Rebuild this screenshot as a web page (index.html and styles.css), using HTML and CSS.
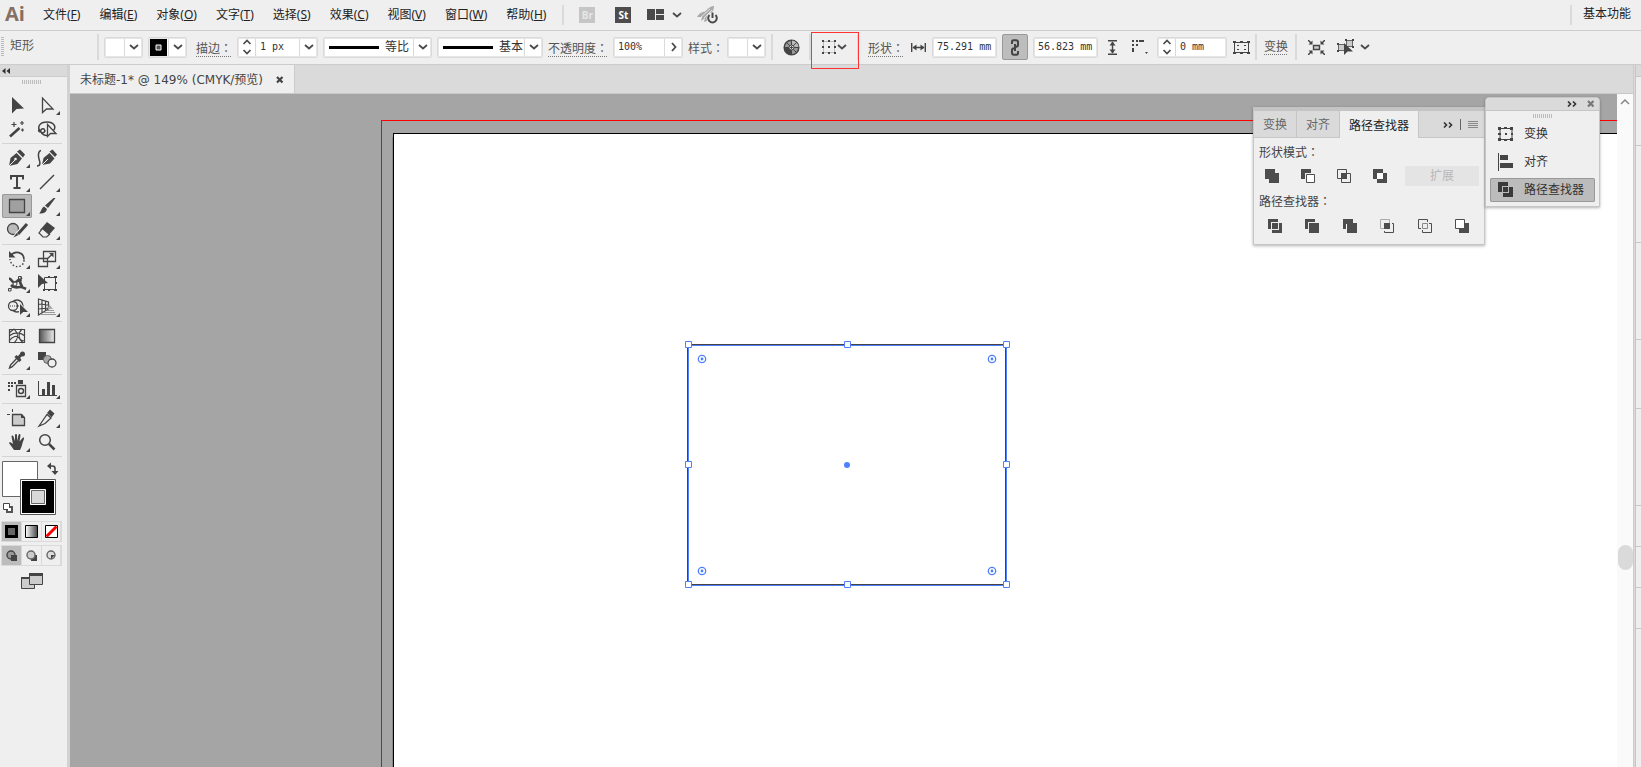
FILE: index.html
```html
<!DOCTYPE html>
<html lang="zh-CN">
<head>
<meta charset="utf-8">
<title>未标题-1</title>
<link rel="stylesheet" href="styles.css">
</head>
<body>
<svg class="defs" width="0" height="0" aria-hidden="true">
  <defs>
    <symbol id="down" viewBox="0 0 10 6"><path d="M1 1l4 3.500 4-3.500" fill="none" stroke="#4a4a4a" stroke-width="1.800"/></symbol>
    <symbol id="updown" viewBox="0 0 10 16"><path d="M1.500 5L5 1.500 8.500 5M1.500 11L5 14.500 8.500 11" fill="none" stroke="#4a4a4a" stroke-width="1.700"/></symbol>
    <symbol id="grip" viewBox="0 0 20 4"><path d="M.5 0v4M2.500 0v4M4.500 0v4M6.500 0v4M8.500 0v4M10.500 0v4M12.500 0v4M14.500 0v4M16.500 0v4M18.500 0v4" stroke="#bcbcbc"/></symbol>
    <symbol id="ffwd" viewBox="0 0 10 6"><path d="M1 .5L3.500 3 1 5.500M6 .5L8.500 3 6 5.500" fill="none" stroke="#333" stroke-width="1.600"/></symbol>
    <symbol id="close" viewBox="0 0 8 8"><path d="M1 1l5.500 5.500M6.500 1L1 6.500" fill="none" stroke="currentColor" stroke-width="2.200"/></symbol>
    <linearGradient id="fade"><stop offset="0" stop-color="#fff"/><stop offset="1" stop-color="#444"/></linearGradient>
    <linearGradient id="fadeDark"><stop offset="0" stop-color="#555"/><stop offset="1" stop-color="#eee"/></linearGradient>
  </defs>
</svg>
<div class="app">
  <header class="menubar">
    <span class="logo">Ai</span>
    <nav class="menus">
      <button>文件(<u>F</u>)</button><button>编辑(<u>E</u>)</button><button>对象(<u>O</u>)</button><button>文字(<u>T</u>)</button><button>选择(<u>S</u>)</button><button>效果(<u>C</u>)</button><button>视图(<u>V</u>)</button><button>窗口(<u>W</u>)</button><button>帮助(<u>H</u>)</button>
    </nav>
    <span class="rule"></span>
    <div class="apps">
      <button class="app-badge dim">Br</button>
      <button class="app-badge">St</button>
      <button class="arrange" aria-label="排列文档"><svg width="18" height="12"><path d="M0 0h8v11H0zM9 0h8v5H9zM9 6h8v5H9z" fill="#4a4a4a"/></svg><svg width="10" height="6"><use href="#down"/></svg></button>
      <button aria-label="GPU 性能"><svg width="22" height="18" viewBox="0 0 22 18"><path d="M0 11C3 6 6 6 8 5.500 11 2 14 0 17 0c0 3-1 5-3 7-2 1-3 4-4 8l-3 1 1-4-4 3 1-4z" fill="#aaa"/><path d="M4 11l9-8M7 12l8-8" stroke="#efefef" stroke-width=".8"/><circle cx="15.500" cy="12" r="6" fill="#efefef"/><path d="M12.500 9a4.300 4.300 0 1 0 6 0M15.500 6.500V12" fill="none" stroke="#4a4a4a" stroke-width="2"/></svg></button>
    </div>
    <span class="spacer"></span>
    <span class="rule"></span>
    <button class="workspace">基本功能</button>
  </header>

  <div class="controlbar">
    <span class="vgrip"></span>
    <span class="kind">矩形</span>
    <span class="rule"></span>
    <button class="combo w39" aria-label="填色"><span class="swatch"></span><span class="arrow"><svg width="10" height="6"><use href="#down"/></svg></span></button>
    <button class="combo w39" aria-label="描边颜色"><span class="swatch"><svg width="17" height="17"><path fill="#000" d="M0 0h17v17H0z"/><path fill="#555" stroke="#fff" d="M6 6h5v5H6z"/></svg></span><span class="arrow"><svg width="10" height="6"><use href="#down"/></svg></span></button>
    <label class="dotted w40" for="weight">描边<span lang="zh-Hant">：</span></label>
    <div class="combo w81"><button class="step" aria-label="增减描边"><svg width="10" height="16"><use href="#updown"/></svg></button><input id="weight" value="1 px"><button class="arrow" aria-label="描边粗细列表"><svg width="10" height="6"><use href="#down"/></svg></button></div>
    <div class="combo w109"><span class="line"></span><select aria-label="变量宽度配置文件"><option>等比</option></select><span class="arrow"><svg width="10" height="6"><use href="#down"/></svg></span></div>
    <div class="combo w106"><span class="line"></span><select aria-label="画笔定义"><option>基本</option></select><span class="arrow"><svg width="10" height="6"><use href="#down"/></svg></span></div>
    <label class="dotted w60" for="opacity">不透明度<span lang="zh-Hant">：</span></label>
    <div class="combo w70"><input id="opacity" value="100%"><button class="arrow" aria-label="不透明度滑块"><svg width="6" height="10"><path d="M1 1l3.500 4L1 9" fill="none" stroke="#4a4a4a" stroke-width="1.800"/></svg></button></div>
    <label class="w34" for="style">样式<span lang="zh-Hant">：</span></label>
    <button class="combo w39" id="style"><span class="swatch"></span><span class="arrow"><svg width="10" height="6"><use href="#down"/></svg></span></button>
    <span class="rule"></span>
    <button class="icon w26" aria-label="重新着色图稿"><svg width="17" height="17" viewBox="0 0 17 17"><circle cx="8.500" cy="8.500" r="7.300" fill="#999" stroke="#444" stroke-width="1.500"/><path d="M8.500 8.500V1.500A7 7 0 0 1 15.500 8.500z" fill="#bbb"/><path d="M8.500 8.500h-7a7 7 0 0 0 7 7z" fill="#444"/><path d="M8.500 1v15M1 8.500h15M3.200 3.200l10.600 10.600M13.800 3.200L3.200 13.800" stroke="#444"/><circle cx="8.500" cy="8.500" r="2.500" fill="#ddd" stroke="#444"/><path d="M8.500 7v3M7 8.500h3" stroke="#444"/></svg></button>
    <span class="rule"></span>
    <button class="icon w36 marked" aria-label="形状选项"><svg width="14" height="14"><path d="M1.500 1.500h11v11h-11z" fill="none" stroke="#888" stroke-dasharray="1 1"/><path d="M0 0h2v2H0zM6 0h2v2H6zM12 0h2v2h-2zM0 6h2v2H0zM6 6h2v2H6zM12 6h2v2h-2zM0 12h2v2H0zM6 12h2v2H6zM12 12h2v2h-2z" fill="#444"/></svg><svg width="10" height="6"><use href="#down"/></svg></button>
    <span class="rule"></span>
    <label class="dotted w40" for="width">形状<span lang="zh-Hant">：</span></label>
    <span class="icon w18"><svg width="15" height="9"><path d="M.7 0v9M14.300 0v9M2 4.500h11" stroke="#444" stroke-width="1.400"/><path d="M1.500 4.500l4-3v6zM13.500 4.500l-4-3v6z" fill="#444"/></svg></span>
    <div class="combo w65"><input id="width" value="75.291 mm"></div>
    <button class="icon link" aria-label="约束宽度和高度比例"><svg width="10" height="17" viewBox="0 0 10 17"><path d="M2 5V3q0-1.800 1.500-1.800h2.500q2 0 2 2v2.500q0 2-2 2H4.500M8 12v2q0 1.800-1.500 1.800H4q-2 0-2-2v-2.500q0-2 2-2h1.500M5 5v7" fill="none" stroke="#444" stroke-width="2"/></svg></button>
    <div class="combo w65"><input aria-label="高度" value="56.823 mm"></div>
    <span class="icon w18"><svg width="9" height="15"><path d="M0 .7h9M0 14.300h9M4.500 2v11" stroke="#444" stroke-width="1.400"/><path d="M4.500 1.500l-3 4h6zM4.500 13.500l-3-4h6z" fill="#444"/></svg></span>
    <button class="icon w26" aria-label="边角类型"><svg width="17" height="15"><path d="M1 0h2v2H1zM5 0h2v2H5zM8 0h5v2H8zM1 4h2v2H1zM5 4h2v2H5zM1 8h2v4H1zM14 12h3l-1.500 2z" fill="#444"/></svg></button>
    <div class="combo w70"><button class="step" aria-label="增减圆角"><svg width="10" height="16"><use href="#updown"/></svg></button><input aria-label="圆角半径" value="0 mm"></div>
    <button class="icon w18" aria-label="对齐像素"><svg width="17" height="13"><path d="M1.500 1.500h14v10h-14z" fill="none" stroke="#444"/><path d="M0 0h3v2H0zM7 0h3v2H7zM14 0h3v2h-3zM0 11h3v2H0zM7 11h3v2H7zM14 11h3v2h-3zM4 4h2v1H4zM11 4h2v1h-2zM4 8h2v1H4zM11 8h2v1h-2z" fill="#444"/></svg></button>
    <span class="rule"></span>
    <button class="plain"><span class="dotted">变换</span></button>
    <span class="rule"></span>
    <button class="icon w28" aria-label="隔离选中的对象"><svg width="17" height="15"><path d="M5.500 5.500h6v4h-6z" fill="#ccc" stroke="#444" stroke-width="1.400"/><path d="M0 0l3 3M17 0l-3 3M0 15l3-3M17 15l-3-3" stroke="#444" stroke-width="1.500"/><path d="M4.500 .5v4H.5zM12.500 .5v4h4zM4.500 14.500v-4H.5zM12.500 14.500v-4h4z" fill="#444"/></svg></button>
    <button class="icon w36" aria-label="选择类似的对象"><svg width="18" height="16"><path d="M1.500 5.500h6v6h-6zM9.500 1.500h6v6h-6z" fill="#ccc" stroke="#666"/><path d="M0 4h2v2H0zM0 11h2v2H0zM8 0h2v2H8zM15 0h2v2h-2zM15 7h2v2h-2z" fill="#444"/><path d="M7 4v12l3.500-3.500H16z" fill="#444"/></svg><svg width="10" height="6"><use href="#down"/></svg></button>
  </div>

  <div class="work">
    <aside class="toolbox">
      <button class="collapse" aria-label="折叠"><svg width="8" height="6"><path d="M3.500 0v6L0 3zM8 0v6L4.500 3z" fill="#333"/></svg></button>
      <div class="griprow"><svg width="20" height="4"><use href="#grip"/></svg></div>
      <div class="tools">
        <button aria-label="选择"><svg viewBox="0 0 30 24"><path d="M10 4v16.500l4.500-4.500 7.500-.5z" fill="#444"/></svg></button>
        <button class="more" aria-label="直接选择"><svg viewBox="0 0 30 24"><path d="M10.500 5v14.500l4-3.500h6.500z" fill="none" stroke="#444" stroke-width="1.300"/></svg></button>
        <button aria-label="魔棒"><svg viewBox="0 0 30 24"><path d="M8 19.500L17.500 11" stroke="#444" stroke-width="2.600"/><path d="M12 5v5M9.500 7.500h5M20 4v4M18 6h4M20.500 11.500v3M19 13h3" stroke="#444" stroke-width="1.200"/></svg></button>
        <button aria-label="套索"><svg viewBox="0 0 30 24"><path d="M9 15c-5-5-1-10 6-10s10 5 6 9M9 15c3 2 5-1 3-3-2-1-4 1-3 3 1 3 5 4 7 3M7 12c-1 2 0 3 2 3" fill="none" stroke="#444" stroke-width="1.500"/><path d="M15.500 7.500v12l3-3h5.500z" fill="#efefef" stroke="#444" stroke-width="1.300"/></svg></button>
        <hr>
        <button class="more" aria-label="钢笔"><svg viewBox="0 0 30 24"><path d="M7 20l1.500-8 6-5 5.500 5.500-4.500 5.500z" fill="#444"/><path d="M15 5.500l3-2 5 5-2 3z" fill="#444"/><path d="M7 20l6-6" stroke="#efefef"/><circle cx="13.500" cy="13" r="1.300" fill="#efefef"/></svg></button>
        <button aria-label="曲率"><svg viewBox="0 0 30 24"><path d="M10 19l1.500-7 6-5 5 5.500-4.500 5z" fill="#444"/><path d="M17.500 5.500l3-2 4.500 5-2 2.500z" fill="#444"/><path d="M10 19l6-6" stroke="#efefef"/><path d="M5 20c4 0 3-4 2-7S6 5 9 4.500" fill="none" stroke="#444" stroke-width="1.500"/></svg></button>
        <button class="more" aria-label="文字"><svg viewBox="0 0 30 24"><path d="M8 5h14v4.500h-2V7h-4v10h2.500v2h-7v-2H14V7h-4v2.500H8z" fill="#444"/></svg></button>
        <button class="more" aria-label="直线段"><svg viewBox="0 0 30 24"><path d="M8 19L22 5" stroke="#444" stroke-width="1.500"/></svg></button>
        <button class="more active" aria-label="矩形"><svg viewBox="0 0 30 24"><path d="M7.500 5.500h15v13h-15z" fill="#a0a0a0" stroke="#444" stroke-width="1.300"/></svg></button>
        <button class="more" aria-label="画笔"><svg viewBox="0 0 30 24"><path d="M23.500 4l-7.500 10-3-2.500L21.500 4z" fill="#444"/><path d="M12 12.500l3 2.500c-1 4-4 5-8 4.500 2-1 2-5 5-7z" fill="#444"/></svg></button>
        <button class="more" aria-label="Shaper"><svg viewBox="0 0 30 24"><circle cx="11" cy="11" r="5.500" fill="#bbb" stroke="#444" stroke-width="1.300"/><path d="M24 7L14 18" stroke="#efefef" stroke-width="5"/><path d="M25 6L16 16" stroke="#444" stroke-width="3"/><path d="M14.500 15l2 2-5 2.500z" fill="#444"/></svg></button>
        <button class="more" aria-label="橡皮擦"><svg viewBox="0 0 30 24"><path d="M15 4l8 6-7 8-8-6z" fill="#444"/><path d="M10.500 10.500l7 6-3 2.500H11l-4-4z" fill="#efefef" stroke="#444" stroke-width="1.200"/></svg></button>
        <hr>
        <button class="more" aria-label="旋转"><svg viewBox="0 0 30 24"><path d="M8.500 8.500C13 3 22 5 22 12.500" fill="none" stroke="#444" stroke-width="1.800"/><path d="M7 4v6.500h6.500z" fill="#444"/><path d="M22 13c0 9-13 9-14-1" fill="none" stroke="#444" stroke-width="1.500" stroke-dasharray="1.500 2"/></svg></button>
        <button class="more" aria-label="比例缩放"><svg viewBox="0 0 30 24"><path d="M11.500 4.500h12v10h-12zM6.500 11.500h9v8h-9z" fill="none" stroke="#444" stroke-width="1.300"/><path d="M15 12l5-4.500" stroke="#444" stroke-width="1.300"/><path d="M21.500 6v4.500L17 6z" fill="#444"/></svg></button>
        <button class="more" aria-label="宽度"><svg viewBox="0 0 30 24"><path d="M7 7.500c3 0 3 5 6 4s4-4 7-5M9 14c4 4 6 2 9 2s4 1 6 2M19 8c-3 4 1 5 1 8" fill="none" stroke="#444" stroke-width="2.600"/><path d="M8 19L18 7" stroke="#444"/><path d="M6.500 17.500h2.500v2.500H6.500zM16.500 5.500h2.500V8h-2.500z" fill="#efefef" stroke="#444"/><circle cx="13" cy="13" r="2" fill="#efefef" stroke="#444"/></svg></button>
        <button aria-label="自由变换"><svg viewBox="0 0 30 24"><path d="M12.500 6.500h11v12h-11z" fill="none" stroke="#444"/><path d="M16 5h2v2h-2zM22 5h3v2h-3zM23 11h2v2h-2zM22 18h3v2h-3zM16 18h2v2h-2zM11 18h2v2h-2z" fill="#444"/><path d="M6 3v14l4-4 6-1z" fill="#444"/></svg></button>
        <button class="more" aria-label="形状生成器"><svg viewBox="0 0 30 24"><circle cx="15" cy="11" r="6" fill="none" stroke="#444" stroke-width="1.300"/><circle cx="11" cy="11" r="4.500" fill="#efefef" stroke="#444" stroke-width="1.300"/><path d="M8 11h11" stroke="#444" stroke-dasharray="1 1"/><path d="M17.500 8v13l3.500-3.500h6z" fill="#444" stroke="#efefef"/></svg></button>
        <button class="more" aria-label="透视网格"><svg viewBox="0 0 30 24"><path d="M6.500 4v16l10-6V7zM6.500 9l10 1M6.500 14l10-1M10 4.500v13M13.500 6v10" fill="none" stroke="#444" stroke-width="1.200"/><path d="M17 9l4 5h-5z" fill="#aaa"/><path d="M15 15.500h7M12 17.500h11M9 19.500h15" stroke="#999"/></svg></button>
        <hr>
        <button aria-label="网格"><svg viewBox="0 0 30 24"><path d="M7.500 5.500h15v13h-15zM7 12c5-4 11-4 16 0M7 17c4-5 8-6 10-3s4 3 6 3M12 5c5 5 5 9 0 14M20 5c-4 4-4 9 1 14M7 9l5-4" fill="none" stroke="#444" stroke-width="1.200"/></svg></button>
        <button aria-label="渐变"><svg viewBox="0 0 30 24"><path d="M7.500 5.500h15v13h-15z" fill="url(#fadeDark)" stroke="#444" stroke-width="1.300"/></svg></button>
        <button class="more" aria-label="吸管"><svg viewBox="0 0 30 24"><path d="M16 9l2 2-8 8-2.500 1 1-3z" fill="#efefef" stroke="#444" stroke-width="1.400"/><path d="M13.500 8l5 5M16 10l5-5" stroke="#444" stroke-width="3"/><circle cx="20.500" cy="6" r="2.500" fill="#444"/></svg></button>
        <button aria-label="混合"><svg viewBox="0 0 30 24"><path d="M6 4h8v8H6z" fill="#444"/><circle cx="15.500" cy="11.500" r="4" fill="#aaa" stroke="#666"/><circle cx="20" cy="15" r="4" fill="#efefef" stroke="#444" stroke-width="1.300"/></svg></button>
        <hr>
        <button class="more" aria-label="符号喷枪"><svg viewBox="0 0 30 24"><path d="M6 5h2v2H6zM9 5h2v2H9zM12 5h2v2h-2zM6 8h2v2H6zM9 8h2v2H9zM6 12h2v2H6zM16 3h5v4h-5z" fill="#444"/><path d="M14.500 8.500h9v11h-9z" fill="none" stroke="#444" stroke-width="1.300"/><circle cx="19" cy="14" r="2.500" fill="none" stroke="#444" stroke-width="1.500"/></svg></button>
        <button class="more" aria-label="柱形图"><svg viewBox="0 0 30 24"><path d="M6.500 4v14.500H25" fill="none" stroke="#444"/><path d="M10 12h3v6h-3zM15 5h3v13h-3zM20 8h3v10h-3z" fill="#444"/></svg></button>
        <hr>
        <button aria-label="画板"><svg viewBox="0 0 30 24"><path d="M10.500 8.500h9l3 3v8h-12z" fill="#ccc" stroke="#444" stroke-width="1.300"/><path d="M10.500 3v3M5 8.500h3" stroke="#444"/><path d="M19 8v4h4z" fill="#444"/></svg></button>
        <button class="more" aria-label="切片"><svg viewBox="0 0 30 24"><path d="M7 20l8-11.500 4 3.500-6 5.500z" fill="#efefef" stroke="#444" stroke-width="1.300"/><path d="M15 7l3-3.500 4.500 4-3 4z" fill="#444"/></svg></button>
        <button class="more" aria-label="抓手"><svg viewBox="0 0 30 24"><path d="M12 20l-5-7c0-1.500 2-1 4 1L9.500 6.500c0-1.500 1.700-1.500 2 0L13 11V5c0-1.500 2-1.500 2 0v6l1.500-6c.5-1.500 2-1 2 .5L17.500 11.500 20.500 8c1-1 2 0 1.500 1-2 4-2 8-4 11z" fill="#444"/></svg></button>
        <button aria-label="缩放"><svg viewBox="0 0 30 24"><circle cx="13" cy="10" r="5.300" fill="none" stroke="#444" stroke-width="1.500"/><path d="M17 14l5.500 5.500" stroke="#444" stroke-width="2.500"/></svg></button>
        <hr>
      </div>
      <svg class="colors" width="58" height="54" viewBox="0 0 58 54" role="img" aria-label="填色和描边">
        <path d="M.5.5h35v35H.5z" fill="#fff" stroke="#666"/>
        <path d="M18.500 18.500h35v35h-35z" fill="#fff" stroke="#555"/><path d="M20 20h32v32H20z"/>
        <path d="M28.500 28.500h15v15h-15z" fill="#d8d8d8" stroke="#fff"/><path d="M29.500 29.500h13v13h-13z" fill="none" stroke="#666"/>
        <path d="M48 5h2.500q2.500 0 2.500 2.500V11" fill="none" stroke="#444" stroke-width="1.600"/><path d="M45 5l4-3.500v7zM53 14l-3.500-4h7z" fill="#444"/>
        <path d="M5 45h6v7H4v-3" fill="#555"/><path d="M1.500 42.500h6v6h-6z" fill="#fff" stroke="#444"/><path d="M6 47h3v3H6z" fill="#fff"/>
      </svg>
      <div class="segment">
        <button class="on" aria-label="颜色"><svg width="13" height="13"><path d="M0 0h13v13H0z"/><path d="M3 3h7v7H3z" fill="#666"/></svg></button>
        <button aria-label="渐变填充"><svg width="13" height="13"><path d="M.5.5h12v12H.5z" fill="url(#fade)" stroke="#000"/></svg></button>
        <button aria-label="无"><svg width="13" height="13"><path d="M.5.5h12v12H.5z" fill="#fff" stroke="#000"/><path d="M1.500 11.500l10-10" stroke="#f00" stroke-width="3"/></svg></button>
      </div>
      <div class="segment">
        <button class="on" aria-label="正常绘图"><svg width="12" height="12"><circle cx="5" cy="5" r="4" fill="#999" stroke="#444" stroke-width="1.400"/><path d="M5 5h6v6H5z" fill="#444"/></svg></button>
        <button aria-label="背面绘图"><svg width="12" height="12"><path d="M5 5h6v6H5z" fill="#444"/><circle cx="5" cy="5" r="4" fill="#ccc" stroke="#666" stroke-width="1.400"/></svg></button>
        <button aria-label="内部绘图"><svg width="12" height="12"><circle cx="6" cy="5" r="4" fill="#ddd" stroke="#666" stroke-width="1.400"/><path d="M6 5h4L6 9z" fill="#444"/></svg></button>
      </div>
      <button class="screen" aria-label="更改屏幕模式"><svg width="22" height="16"><path d="M.5 4.500h13v11H.5z" fill="#ccc" stroke="#444"/><path d="M8.500.5h13v11h-13z" fill="#ccc" stroke="#444"/><path d="M8 0h14v3H8zM0 4h8v2H0z" fill="#444"/></svg></button>
    </aside>

    <main class="document">
      <div class="tabbar"><div class="doctab"><span>未标题-1* @ 149% (CMYK/预览)</span><button aria-label="关闭"><svg width="8" height="8"><use href="#close"/></svg></button></div></div>
      <div class="stage">
        <div class="canvas">
          <div class="bleed"></div>
          <div class="artboard"></div>
          <svg class="selection" width="334" height="256" fill="none">
            <path d="M7.500 245V4.500H325.500V244.500H7" stroke="#444"/>
            <path d="M8.500 245.500V5.500H326.500V245.500z" stroke="#4f80ff"/>
            <g fill="#fff" stroke="#4f80ff"><path d="M5.500 1.500h6v6h-6zM164.500 1.500h6v6h-6zM323.500 1.500h6v6h-6zM5.500 121.500h6v6h-6zM323.500 121.500h6v6h-6zM5.500 241.500h6v6h-6zM164.500 241.500h6v6h-6zM323.500 241.500h6v6h-6z"/></g>
            <g fill="#fff" stroke="#4f80ff" stroke-width="1.300"><circle cx="22" cy="19" r="3.700"/><circle cx="312" cy="19" r="3.700"/><circle cx="22" cy="231" r="3.700"/><circle cx="312" cy="231" r="3.700"/></g>
            <g fill="#4f80ff"><circle cx="22" cy="19" r="1.400"/><circle cx="312" cy="19" r="1.400"/><circle cx="22" cy="231" r="1.400"/><circle cx="312" cy="231" r="1.400"/><circle cx="167" cy="125" r="3"/></g>
          </svg>
        </div>
        <div class="scrollbar"><svg width="10" height="6"><path d="M1 5l4-4 4 4" fill="none" stroke="#888" stroke-width="1.500"/></svg><span class="thumb"></span></div>

        <section class="panel pathfinder">
          <div class="tabs">
            <button>变换</button><button>对齐</button><button class="current">路径查找器</button>
            <span class="tabtools"><svg width="10" height="6" viewBox="0 0 10 6"><use href="#ffwd"/></svg><i></i><svg width="10" height="8"><path d="M0 .5h10M0 2.500h10M0 4.500h10M0 6.500h10" stroke="#888"/></svg></span>
          </div>
          <h2>形状模式<span lang="zh-Hant">：</span></h2>
          <div class="modes">
            <button aria-label="联集"><svg width="14" height="14"><path d="M0 0h10v4h4v10H4v-4H0z" fill="#4d4d4d"/></svg></button>
            <button aria-label="减去顶层"><svg width="14" height="14"><path d="M0 0h10v4H4v6H0z" fill="#4d4d4d"/><path d="M5.500 5.500h8v8h-8z" fill="#fff" stroke="#4d4d4d"/></svg></button>
            <button aria-label="交集"><svg width="14" height="14"><path d="M.5.5h9v9h-9zM4.500 4.500h9v9h-9z" fill="none" stroke="#4d4d4d"/><path d="M4 4h6v6H4z" fill="#4d4d4d"/></svg></button>
            <button aria-label="差集"><svg width="14" height="14"><path d="M0 0h10v4h4v10H4v-4H0z" fill="#4d4d4d"/><path d="M4 4h6v6H4z" fill="#fff"/></svg></button>
            <button class="expand" disabled>扩展</button>
          </div>
          <h2>路径查找器<span lang="zh-Hant">：</span></h2>
          <div class="finders">
            <button aria-label="分割"><svg width="14" height="14"><path d="M0 0h10v3H3v7H0zM11 4h3v10H4v-3h7z" fill="#4d4d4d"/><path d="M4 4h6v6H4z" fill="#4d4d4d"/></svg></button>
            <button aria-label="修边"><svg width="14" height="14"><path d="M0 0h10v3H3v7H0zM4 4h10v10H4z" fill="#4d4d4d"/></svg></button>
            <button aria-label="合并"><svg width="14" height="14"><path d="M0 0h10v4h4v10H4v-4H0z" fill="#4d4d4d"/><path d="M3.500 10V5" stroke="#fff"/></svg></button>
            <button aria-label="裁剪"><svg width="14" height="14" fill="none"><path d="M.5.5h9v9h-9z" stroke="#aaa"/><path d="M12 4.500h1.500v9h-9V12" stroke="#4d4d4d"/><path d="M4 4h6v6H4z" fill="#4d4d4d"/></svg></button>
            <button aria-label="轮廓"><svg width="14" height="14" fill="none" stroke="#4d4d4d"><path d="M3 9.500H.5v-9h9V3M11 4.500h2.500v9h-9V11"/><path d="M4.500 9.500v-5h5v5z" stroke="#888"/></svg></button>
            <button aria-label="减去后方对象"><svg width="14" height="14"><path d="M4 4h10v10H4z" fill="#4d4d4d"/><path d="M.5.5h9v9h-9z" fill="#fff" stroke="#4d4d4d"/></svg></button>
          </div>
        </section>

        <section class="panel dockpanel">
          <div class="dockhead"><svg width="10" height="6"><use href="#ffwd"/></svg><button aria-label="关闭面板"><svg width="8" height="8"><use href="#close"/></svg></button></div>
          <div class="dockgrip"><svg width="20" height="4"><use href="#grip"/></svg></div>
          <button class="dockitem"><svg width="16" height="16"><path d="M2 2.500h12v11H2z" fill="none" stroke="#444"/><path d="M0 1h3v3H0zM6 1h3v2H6zM12 1h3v3h-3zM0 7h3v2H0zM13 7h2v2h-2zM0 12h3v3H0zM6 13h3v2H6zM12 12h3v3h-3zM7 7h2v2H7z" fill="#444"/></svg>变换</button>
          <button class="dockitem"><svg width="16" height="18"><path d="M0 0h1v18H0zM2 10h13v5H2z" fill="#444"/><path d="M2 2h8v5H2z" fill="#444"/></svg>对齐</button>
          <button class="dockitem active"><svg width="16" height="16"><path d="M0 0h10v4H4v6H0zM11 5h4v10H5v-4h6z" fill="#3a3a3a"/><path d="M5 5h5v5H5z" fill="#3a3a3a"/></svg>路径查找器</button>
        </section>
      </div>
    </main>
    <aside class="dockedge"><span class="top"></span><span class="a"></span><span class="b"></span><span class="b"></span><span class="c"></span><span class="b"></span><span class="d"></span><span class="d"></span><span class="d"></span></aside>
  </div>
</div>
</body>
</html>
```
FILE: styles.css
```css
*, ::before, ::after { box-sizing: border-box; }
body {
  margin: 0;
  font: 12px/16px "Noto Sans", "Noto Sans CJK SC", sans-serif;
  color: #222;
  background: #efefef;
}
:lang(zh-Hant) { font-family: "Noto Sans CJK TC", sans-serif; }
svg { display: block; flex: none; }
.defs { position: absolute; }
button, input, select {
  font: inherit;
  color: inherit;
  border: 0;
  padding: 0;
  margin: 0;
  background: none;
  border-radius: 0;
  min-width: 0;
}
button { white-space: nowrap; }
.app { height: 100vh; display: flex; flex-direction: column; overflow: hidden; }
.spacer { flex: 1; }
.rule { flex: none; width: 2px; height: 26px; background: #dadada; }

/* menu bar */
.menubar {
  flex: none;
  height: 31px;
  display: flex;
  align-items: center;
  border-bottom: 1px solid #ccc;
}
.menubar .rule { height: 20px; }
.logo { width: 43px; padding: 0 0 2px 5px; font: bold 20px/24px "Open Sans", sans-serif; color: #857063; }
.menus { display: flex; gap: 19px; padding-right: 16px; }
.apps { display: flex; align-items: center; padding-left: 15px; }
.app-badge {
  width: 16px;
  height: 16px;
  margin-right: 20px;
  background: #4d4d4d;
  color: #fff;
  font: bold 10px/16px "Open Sans", sans-serif;
}
.app-badge.dim { background: #c6c6c6; color: #e6e6e6; }
.arrange { display: flex; align-items: center; gap: 7px; margin-right: 15px; }
.app-badge + .arrange { margin-left: -4px; }
.workspace { padding: 0 10px 3px 11px; }

/* control bar */
.controlbar {
  flex: none;
  height: 34px;
  display: flex;
  align-items: center;
  gap: 5px;
  padding: 4px 0 5px;
  border-bottom: 1px solid #ccc;
  color: #555;
  white-space: nowrap;
}
.controlbar > * { flex: none; }
.controlbar label { line-height: 17px; padding-top: 1px; }
.vgrip { width: 5px; height: 20px; border-left: 1px solid #efefef; background: linear-gradient(to right, transparent 3px, #efefef 3px), repeating-linear-gradient(#bbb 0 1px, #efefef 1px 2px); }
.kind { width: 82px; padding-bottom: 2px; }
.dotted { background: repeating-linear-gradient(to right, #777 0 1px, transparent 1px 2px) left bottom / 100% 1px no-repeat content-box; }
.dotted.w40 { padding-left: 4px; }
.combo {
  display: flex;
  height: 21px;
  border: 1px solid #dadada;
  border-radius: 2px;
  background: #fff;
  outline: 1px solid #e6e6e6;
  outline-offset: -2px;
}
.combo input { flex: 1; width: 0; padding: 0 4px 1px; font: 10px/16px "DejaVu Sans Mono", monospace; color: #333; }
.combo select { flex: 1; appearance: none; color: #333; padding-left: 6px; }
.swatch { flex: 1; display: flex; align-items: center; justify-content: center; }
.arrow { flex: none; width: 18px; display: flex; align-items: center; justify-content: center; border-left: 1px solid #dadada; }
.step { flex: none; width: 18px; display: flex; align-items: center; justify-content: center; border-right: 1px solid #dadada; }
.line { align-self: center; width: 50px; height: 3px; margin-left: 5px; background: #000; }
.w18 { width: 18px; } .w26 { width: 26px; } .w28 { width: 28px; } .w34 { width: 34px; }
.w36 { width: 36px; } .w39 { width: 39px; } .w40 { width: 40px; } .w60 { width: 60px; }
.w65 { width: 65px; } .w70 { width: 70px; } .w81 { width: 81px; } .w106 { width: 106px; } .w109 { width: 109px; }
.icon { display: flex; align-items: center; justify-content: center; gap: 5px; }
.link { width: 26px; height: 26px; background: #bdbdbd; border: 1px solid #999; border-radius: 2px; }
.plain { width: 28px; }
.marked { position: relative; gap: 1px; }
.marked::after { content: ""; position: absolute; left: -5px; top: -8px; width: 48px; height: 37px; border: 1px solid #f33; z-index: 5; }

/* tools */
.work { flex: 1; min-height: 0; display: flex; }
.toolbox { flex: none; width: 70px; border-right: 3px solid #d2d2d2; }
.collapse { display: flex; align-items: center; width: 100%; height: 12px; padding-left: 2px; background: #dadada; border-bottom: 1px solid #ccc; }
.griprow { height: 16px; padding: 3px 0 0 22px; }
.tools { display: grid; grid-template-columns: 30px 30px; grid-auto-rows: auto; padding-left: 2px; }
.tools button { position: relative; height: 24px; border-radius: 2px; }
.tools button svg { width: 30px; height: 24px; }
.tools .more::after { content: ""; position: absolute; right: 2px; bottom: 2px; border: 2px solid #444; border-left-color: transparent; border-top-color: transparent; }
.tools .active { background: #bababa; box-shadow: inset 0 0 0 1px #999; }
.tools hr { grid-column: 1 / 3; width: 100%; height: 1px; margin: 2px 0; border: 0; background: #d4d4d4; }
.colors { margin: 2px 0 6px 2px; }
.segment { display: grid; grid-template-columns: 20px 20px 19px; width: 61px; margin: 0 0 3px 1px; border: 1px solid #dadada; }
.segment button { height: 19px; display: flex; align-items: center; justify-content: center; border-right: 1px solid #dadada; }
.segment .on { background: #bcbcbc; }
.screen { margin: 4px 0 0 21px; }

/* document */
.document { flex: 1; min-width: 0; display: flex; flex-direction: column; border-right: 1px solid #ccc; }
.tabbar { flex: none; height: 29px; display: flex; background: #dadada; border-bottom: 1px solid #c8c8c8; }
.doctab { display: flex; align-items: center; gap: 13px; padding: 1px 10px 0; background: #efefef; border-right: 1px solid #ccc; color: #444; font-family: "DejaVu Sans", "Noto Sans CJK SC", sans-serif; }
.stage { flex: 1; min-height: 0; display: flex; position: relative; }
.canvas { flex: 1; position: relative; overflow: hidden; background: #a5a5a5; }
.bleed { position: absolute; inset: 26px -1px -1px 311px; border: 1px solid #f00; }
.artboard { position: absolute; inset: 39px -1px -1px 323px; border: 1px solid #000; background: #fff; box-shadow: -1px 4px 0 #888; }
.selection { position: absolute; left: 610px; top: 246px; }
.scrollbar { flex: none; width: 16px; position: relative; padding: 5px 3px; background: #fafafa; }
.thumb { position: absolute; left: 1px; top: 451px; width: 15px; height: 25px; border-radius: 8px; background: #dadada; }

/* floating panels */
.panel { position: absolute; border: 1px solid #c6c6c6; background: #efefef; box-shadow: 0 1px 3px rgba(0, 0, 0, .3); color: #444; }
.pathfinder { right: 148px; top: 13px; width: 232px; height: 138px; border-top: 4px solid #c4c4c4; }
.tabs { display: flex; height: 27px; background: #dadada; }
.tabs button { padding: 2px 9px 0; border-right: 1px solid #c6c6c6; border-bottom: 1px solid #c6c6c6; color: #666; }
.tabs .current { background: #efefef; border-bottom: 0; color: #222; }
.tabtools { flex: 1; display: flex; align-items: center; justify-content: flex-end; gap: 7px; padding: 1px 6px 0 0; border-bottom: 1px solid #c6c6c6; }
.tabtools i { width: 1px; height: 11px; background: #666; }
.panel h2 { margin: 6px 0 5px 5px; font-size: 12px; font-weight: normal; line-height: 16px; }
.modes { display: flex; align-items: center; height: 20px; padding: 0 5px 0 11px; gap: 22px; }
.expand { flex: 1; height: 20px; margin-left: -4px; background: #e4e4e4; color: #b8b8b8; }
.panel .modes + h2 { margin: 7px 0 9px 5px; }
.finders { display: flex; justify-content: space-between; padding: 0 15px 0 14px; }
.dockpanel { right: 33px; top: 3px; width: 115px; height: 110px; border-radius: 4px 4px 0 0; }
.dockhead { display: flex; align-items: center; justify-content: flex-end; gap: 10px; height: 13px; padding-right: 4px; background: #dadada; border-bottom: 1px solid #c6c6c6; border-radius: 4px 4px 0 0; }
.dockhead button { color: #777; }
.dockgrip { height: 11px; padding: 3px 0 0 47px; }
.dockitem { display: flex; align-items: center; gap: 10px; width: 105px; height: 24px; margin: 0 0 4px 4px; padding-left: 8px; border-radius: 2px; color: #333; }
.dockitem.active { background: #bcbcbc; box-shadow: inset 0 0 0 1px #999; }

.dockedge { flex: none; width: 7px; padding-left: 1px; display: flex; flex-direction: column; background: #dadada; }
.dockedge span { flex: none; border-left: 1px solid #c6c6c6; border-bottom: 1px solid #c6c6c6; background: #efefef; }
.dockedge .top { height: 12px; background: #dadada; }
.dockedge .a { height: 69px; }
.dockedge .b { height: 97px; }
.dockedge .c { height: 69px; }
.dockedge .d { height: 41px; }
.dockedge::after { content: ""; flex: 1; border-left: 1px solid #c6c6c6; background: #efefef; }
```
